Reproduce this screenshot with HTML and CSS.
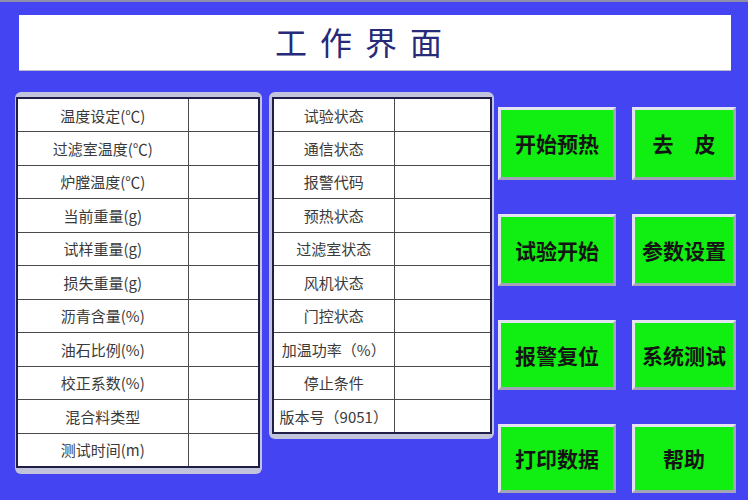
FILE: index.html
```html
<!DOCTYPE html>
<html lang="zh">
<head>
<meta charset="utf-8">
<title>工作界面</title>
<link rel="stylesheet" href="styles.css">
</head>
<body>
<div class="screen">
  <div class="title"><span class="title-text">工作界面</span></div>
  <div class="main">
    <div class="panel panel-left">
      <table class="grid">
        <tr><td class="lbl">温度设定(℃)</td><td></td></tr>
        <tr><td class="lbl">过滤室温度(℃)</td><td></td></tr>
        <tr><td class="lbl">炉膛温度(℃)</td><td></td></tr>
        <tr><td class="lbl">当前重量(g)</td><td></td></tr>
        <tr><td class="lbl">试样重量(g)</td><td></td></tr>
        <tr><td class="lbl">损失重量(g)</td><td></td></tr>
        <tr><td class="lbl">沥青含量(%)</td><td></td></tr>
        <tr><td class="lbl">油石比例(%)</td><td></td></tr>
        <tr><td class="lbl">校正系数(%)</td><td></td></tr>
        <tr><td class="lbl">混合料类型</td><td></td></tr>
        <tr><td class="lbl">测试时间(m)</td><td></td></tr>
      </table>
    </div>
    <div class="panel panel-mid">
      <table class="grid">
        <tr><td class="lbl">试验状态</td><td></td></tr>
        <tr><td class="lbl">通信状态</td><td></td></tr>
        <tr><td class="lbl">报警代码</td><td></td></tr>
        <tr><td class="lbl">预热状态</td><td></td></tr>
        <tr><td class="lbl">过滤室状态</td><td></td></tr>
        <tr><td class="lbl">风机状态</td><td></td></tr>
        <tr><td class="lbl">门控状态</td><td></td></tr>
        <tr><td class="lbl">加温功率（%）</td><td></td></tr>
        <tr><td class="lbl">停止条件</td><td></td></tr>
        <tr><td class="lbl">版本号（9051）</td><td></td></tr>
      </table>
    </div>
    <div class="buttons">
      <div class="btn b1">开始预热</div>
      <div class="btn b2">去　皮</div>
      <div class="btn b3">试验开始</div>
      <div class="btn b4">参数设置</div>
      <div class="btn b5">报警复位</div>
      <div class="btn b6">系统测试</div>
      <div class="btn b7">打印数据</div>
      <div class="btn b8">帮助</div>
    </div>
  </div>
</div>
</body>
</html>
```

FILE: styles.css
```css
html, body {
  margin: 0;
  padding: 0;
}
body {
  width: 748px;
  height: 500px;
  overflow: hidden;
  background: #4444f2;
  font-family: "Noto Sans CJK SC", "Noto Sans", sans-serif;
}
.screen {
  width: 748px;
  height: 500px;
  box-sizing: border-box;
  border-top: 2px solid #8e8ea8;
  display: flex;
  flex-direction: column;
}
.title {
  margin: 13px 17px 0 19px;
  height: 55px;
  background: #ffffff;
  box-shadow: 0 1px 0 #b8b8d0;
  display: flex;
  align-items: center;
  justify-content: center;
}
.title-text {
  font-size: 32px;
  color: #262a78;
  letter-spacing: 13px;
  padding-right: 20px;
  padding-bottom: 4px;
  display: inline-block;
  line-height: 1;
}
.main {
  display: flex;
  align-items: flex-start;
  margin-top: 22px;
  padding-left: 15px;
}
.panel {
  background: #c2c4dc;
  border-radius: 6px;
  padding: 5px 2px 6px 1px;
  box-sizing: border-box;
}
.panel-left {
  width: 247px;
}
.panel-mid {
  width: 225px;
  margin-left: 7px;
  padding: 5px 2px 5px 3px;
}
.grid {
  width: 100%;
  border-collapse: collapse;
  background: #ffffff;
  border: 2px solid #1e1e46;
}
.grid td {
  border: 1px solid #4a4a4a;
  height: 33.5px;
  padding: 0;
  box-sizing: border-box;
}
.grid td.lbl {
  text-align: center;
  font-size: 15px;
  color: #3a3a3a;
  white-space: nowrap;
  line-height: 1;
}
.panel-left .grid td.lbl {
  width: 171px;
}
.panel-mid .grid td.lbl {
  width: 121px;
}
.buttons {
  margin-left: 4px;
  margin-top: 15px;
  display: grid;
  grid-template-columns: 118px 104px;
  grid-template-rows: 73px 72px 70px 69px;
  column-gap: 16px;
  row-gap: 34px;
}
.btn {
  background: #11ee11;
  border: 3px solid;
  border-color: #e4e4f0 #a4a4b8 #a4a4b8 #e4e4f0;
  box-sizing: border-box;
  display: flex;
  align-items: center;
  justify-content: center;
  font-size: 21px;
  font-weight: bold;
  color: #141414;
  line-height: 1;
}
```
